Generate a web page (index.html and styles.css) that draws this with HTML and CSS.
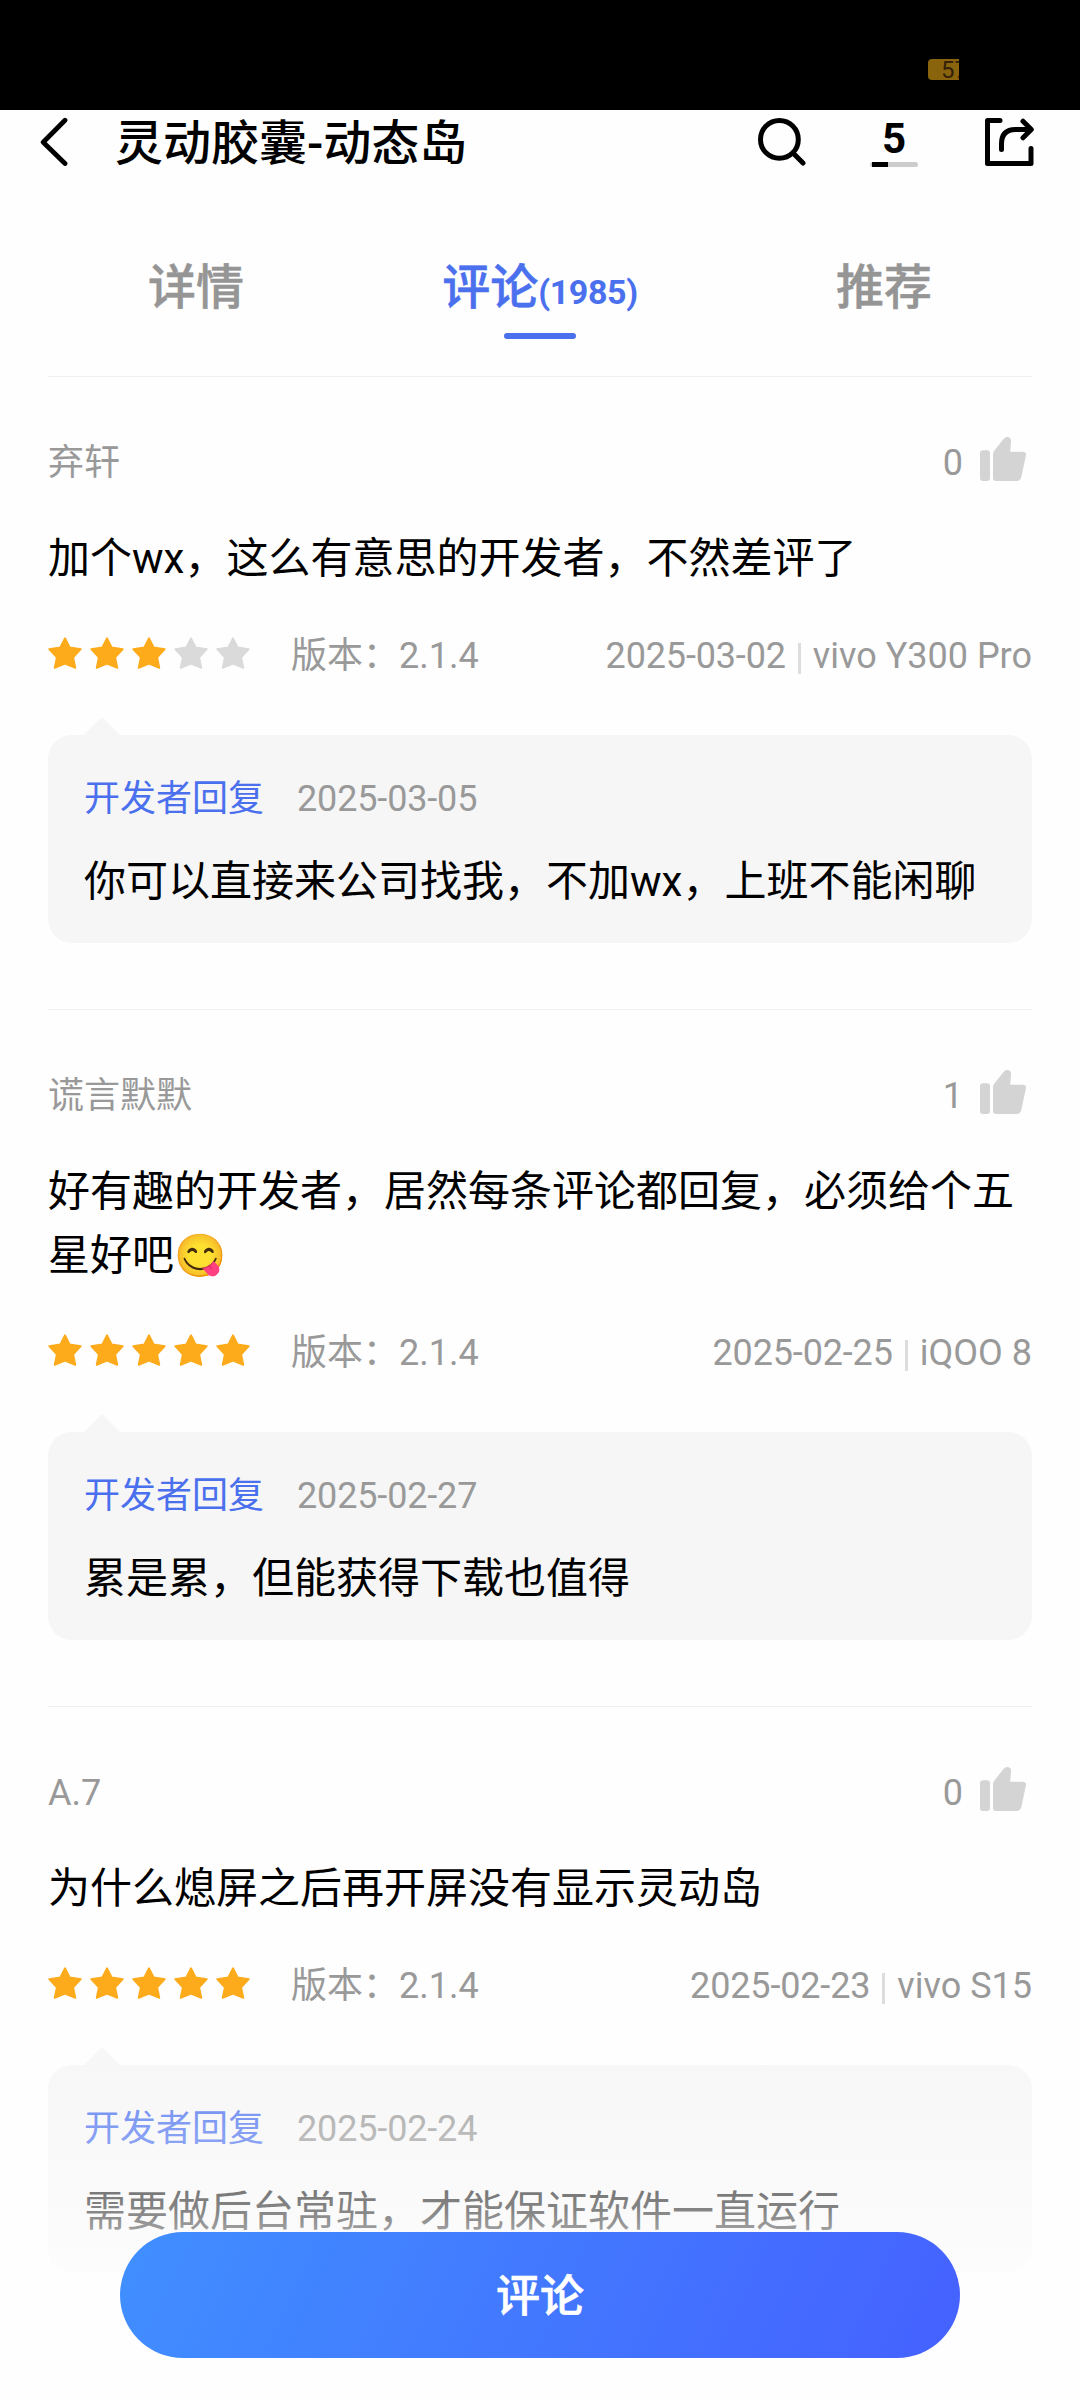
FILE: index.html
```html
<!DOCTYPE html>
<html lang="zh-CN">
<head>
<meta charset="utf-8">
<title>灵动胶囊-动态岛</title>
<link rel="stylesheet" href="styles.css">
</head>
<body>
<svg class="defs" width="0" height="0" aria-hidden="true">
  <symbol id="star" viewBox="0 0 34 32"><path d="M17 1.2 L21.7 10.5 L32.8 12.2 L25.2 20.4 L27.3 30.8 L17 26.6 L6.7 30.8 L8.8 20.4 L1.2 12.2 L12.3 10.5 Z" fill="currentColor" stroke="currentColor" stroke-width="1.8" stroke-linejoin="round"/></symbol>
  <symbol id="thumb" viewBox="0 0 46 44"><path fill="currentColor" d="M3 13.3H7Q10 13.3 10 16.3V41Q10 44 7 44H3Q0 44 0 41V16.3Q0 13.3 3 13.3ZM13 17Q13 15 14.4 13.5L23.5 2Q25.8 -.6 28.8 .3Q31.2 1.2 31.1 3.8L30.2 14.8H42.5Q46.8 14.8 45.8 19L41.3 40Q40.3 44 36.5 44H16Q13 44 13 41Z"/></symbol>
</svg>
<div class="screen">
  <div class="status"><div class="battery"><span>57</span></div></div>
  <header class="bar">
    <svg class="back" width="28" height="50" viewBox="0 0 28 50"><path d="M25 3.2 L3.2 25.3 L25 46.5" fill="none" stroke="#000" stroke-width="4.8" stroke-linecap="round" stroke-linejoin="round"/></svg>
    <h1>灵动胶囊-动态岛</h1>
    <div class="tools">
      <svg width="48" height="48" viewBox="0 0 48 48" fill="none" stroke="#000" stroke-width="5" stroke-linecap="round"><circle cx="21.4" cy="21.4" r="18.9"/><path d="M35.5 35.5 L45 45"/></svg>
      <div class="downloads"><b>5</b><i></i></div>
      <svg width="50" height="48" viewBox="0 0 50 48" fill="none" stroke="#000" stroke-width="5" stroke-linecap="round" stroke-linejoin="round"><path d="M15 2.5H2.5V45.5H46V30.5"/><path d="M16.5 31.5V26Q16.5 11.5 30.5 11.5H45.5M38 3.2L46.3 11.5L38 19.8"/></svg>
    </div>
  </header>
  <nav class="tabs">
    <span>详情</span>
    <span class="active">评论<small>(1985)</small><i></i></span>
    <span>推荐</span>
  </nav>
  <main>
    <article>
      <div class="head"><span>弃轩</span><span class="like">0<svg width="46" height="44"><use href="#thumb"/></svg></span></div>
      <p class="text">加个wx，这么有意思的开发者，不然差评了</p>
      <div class="meta">
        <div class="stars"><svg><use href="#star"/></svg><svg><use href="#star"/></svg><svg><use href="#star"/></svg><svg class="off"><use href="#star"/></svg><svg class="off"><use href="#star"/></svg></div>
        <span>版本：2.1.4</span>
        <span class="date">2025-03-02</span><i class="sep"></i><span>vivo Y300 Pro</span>
      </div>
      <section class="reply">
        <div class="by"><em>开发者回复</em><span>2025-03-05</span></div>
        <p class="text">你可以直接来公司找我，不加wx，上班不能闲聊</p>
      </section>
    </article>
    <article>
      <div class="head"><span>谎言默默</span><span class="like">1<svg width="46" height="44"><use href="#thumb"/></svg></span></div>
      <p class="text">好有趣的开发者，居然每条评论都回复，必须给个五星好吧😋</p>
      <div class="meta">
        <div class="stars"><svg><use href="#star"/></svg><svg><use href="#star"/></svg><svg><use href="#star"/></svg><svg><use href="#star"/></svg><svg><use href="#star"/></svg></div>
        <span>版本：2.1.4</span>
        <span class="date">2025-02-25</span><i class="sep"></i><span>iQOO 8</span>
      </div>
      <section class="reply">
        <div class="by"><em>开发者回复</em><span>2025-02-27</span></div>
        <p class="text">累是累，但能获得下载也值得</p>
      </section>
    </article>
    <article>
      <div class="head"><span>A.7</span><span class="like">0<svg width="46" height="44"><use href="#thumb"/></svg></span></div>
      <p class="text">为什么熄屏之后再开屏没有显示灵动岛</p>
      <div class="meta">
        <div class="stars"><svg><use href="#star"/></svg><svg><use href="#star"/></svg><svg><use href="#star"/></svg><svg><use href="#star"/></svg><svg><use href="#star"/></svg></div>
        <span>版本：2.1.4</span>
        <span class="date">2025-02-23</span><i class="sep"></i><span>vivo S15</span>
      </div>
      <section class="reply">
        <div class="by"><em>开发者回复</em><span>2025-02-24</span></div>
        <p class="text">需要做后台常驻，才能保证软件一直运行</p>
      </section>
    </article>
  </main>
  <div class="dock"><button>评论</button></div>
</div>
</body>
</html>
```
FILE: styles.css
```css
* { box-sizing: border-box; margin: 0; padding: 0; }
body {
  background: #fff;
  font-family: Roboto, "Noto Sans CJK SC", "Noto Color Emoji", sans-serif;
  color: #000;
}
.defs { position: absolute; }
.screen {
  position: relative;
  width: 1080px;
  height: 2400px;
  overflow: hidden;
  background: #fefefe;
}

/* status bar */
.status {
  height: 110px;
  padding: 59px 121px 0 0;
  background: #000;
  display: flex;
  justify-content: flex-end;
}
.battery {
  width: 31px;
  height: 21px;
  padding-left: 13px;
  border-radius: 4px 0 0 4px;
  background: #8a640c;
  color: #35200a;
  font-size: 24px;
  line-height: 22px;
  overflow: hidden;
  white-space: nowrap;
}

/* title bar */
.bar {
  height: 64px;
  padding: 0 45px 0 40px;
  display: flex;
  align-items: center;
}
h1 {
  margin-left: 47px;
  padding-top: 4px;
  font-size: 48px;
  font-weight: 500;
  line-height: 64px;
}
.tools {
  margin-left: auto;
  display: flex;
  align-items: center;
}
.downloads {
  width: 48px;
  height: 50px;
  margin: 0 67px 0 64px;
  display: flex;
  flex-direction: column;
  align-items: center;
  justify-content: space-between;
}
.downloads b { font-size: 42px; font-weight: 700; line-height: 44px; }
.downloads i {
  width: 48px;
  height: 5px;
  border-radius: 3px;
  background: linear-gradient(#000, #000) 2px 0 / 16px 5px no-repeat #ccc;
}

/* tabs */
.tabs {
  height: 202px;
  padding: 82px 24px 0;
  display: grid;
  grid-template-columns: repeat(3, 1fr);
  justify-items: center;
  font-size: 48px;
  font-weight: 500;
  line-height: 64px;
  color: #959595;
  -webkit-text-stroke: .5px;
}
.tabs .active { color: #4a70ee; }
.tabs small { font-size: 34px; font-weight: 700; line-height: 1; letter-spacing: -.4px; -webkit-text-stroke: 0; }
.tabs .active i {
  display: block;
  width: 72px;
  height: 6px;
  margin: 13px auto 0;
  border-radius: 3px;
  background: #4a70ee;
}

/* reviews */
main { padding: 0 48px; }
article { padding: 61px 0 66px; border-top: 1px solid #f0f0f0; }
.head, .meta, .by {
  height: 50px;
  display: flex;
  align-items: center;
  font-size: 36px;
  line-height: 50px;
  color: #999;
}
.head { justify-content: space-between; }
.like { display: flex; align-items: center; gap: 17px; margin-right: 6px; }
.like svg { color: #d4d4d4; margin-top: -8px; }
.text { font-size: 42px; line-height: 64px; }
.head + .text { margin-top: 39px; }
.meta { margin-top: 40px; }
.stars { display: flex; gap: 8px; margin: -6px 41px 0 0; }
.stars svg { width: 34px; height: 32px; color: #fdab1b; }
.stars .off { color: #dadada; }
.date { margin-left: auto; letter-spacing: -.15px; }
.by span { letter-spacing: -.15px; }
.sep { width: 3px; height: 31px; margin: 4px 12px 0 12px; background: #ddd; }

/* developer reply bubble */
.reply {
  position: relative;
  height: 208px;
  margin-top: 54px;
  padding: 39px 36px 29px;
  border-radius: 24px;
  background: #f6f6f6;
}
.reply::before {
  content: "";
  position: absolute;
  left: 36px;
  top: -18px;
  width: 36px;
  height: 18px;
  background: #f6f6f6;
  clip-path: polygon(50% 0, 100% 100%, 0 100%);
}
.by { gap: 33px; }
.by em { font-style: normal; color: #4a70ee; }
.reply .text { margin-top: 26px; }

/* floating comment button over the fading list */
.dock {
  position: absolute;
  left: 0;
  right: 0;
  bottom: 0;
  height: 400px;
  padding: 232px 120px 0;
  background: linear-gradient(rgba(254, 254, 254, 0), rgba(254, 254, 254, .52) 210px, rgba(254, 254, 254, .85) 275px, #fefefe 320px);
}
button {
  display: block;
  width: 840px;
  height: 126px;
  padding-top: 5px;
  border: 0;
  border-radius: 63px;
  background: linear-gradient(115deg, #408fff, #4561ff);
  color: #fff;
  font: 500 44px/121px Roboto, "Noto Sans CJK SC", sans-serif;
  -webkit-text-stroke: .6px;
}
```
